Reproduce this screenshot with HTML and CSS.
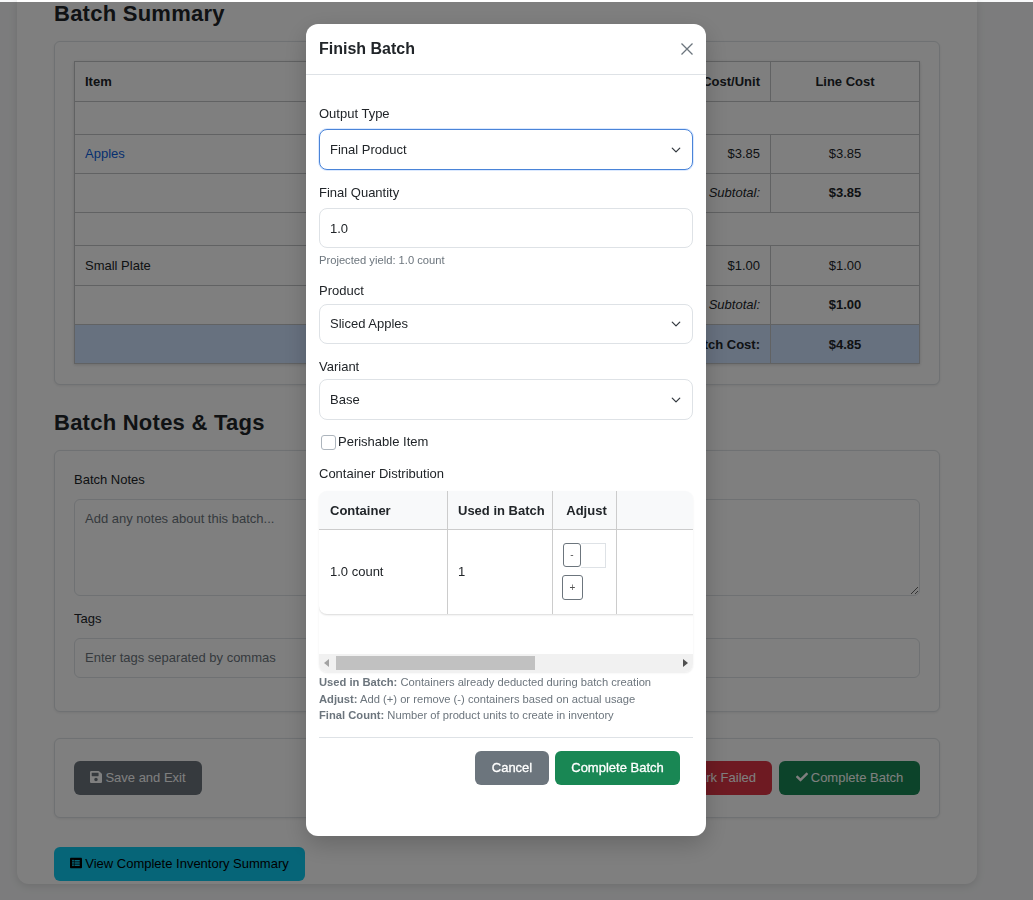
FILE: index.html
```html
<!DOCTYPE html>
<html lang="en">
<head>
<meta charset="utf-8">
<title>Finish Batch</title>
<link rel="stylesheet" href="styles.css">
</head>
<body>
<div class="page">
  <main class="card">
    <h2 class="heading">Batch Summary</h2>
    <section class="panel summary">
      <table class="cost">
        <colgroup><col class="c-item"><col class="c-mid"><col class="c-unit"><col class="c-line"></colgroup>
        <thead>
          <tr class="r-head"><th class="left">Item</th><th></th><th class="right">Cost/Unit</th><th>Line Cost</th></tr>
        </thead>
        <tbody>
          <tr class="r-group"><td colspan="4"></td></tr>
          <tr class="r-item"><td><a class="link" href="#">Apples</a></td><td></td><td class="right">$3.85</td><td class="center">$3.85</td></tr>
          <tr class="r-sub"><td colspan="3" class="right em">Ingredient Subtotal:</td><td class="center strong">$3.85</td></tr>
          <tr class="r-group"><td colspan="4"></td></tr>
          <tr class="r-item r-tall"><td>Small Plate</td><td></td><td class="right">$1.00</td><td class="center">$1.00</td></tr>
          <tr class="r-sub"><td colspan="3" class="right em">Container Subtotal:</td><td class="center strong">$1.00</td></tr>
          <tr class="r-total"><td colspan="3" class="right strong">Total Batch Cost:</td><td class="center strong">$4.85</td></tr>
        </tbody>
      </table>
    </section>

    <h2 class="heading heading-notes">Batch Notes &amp; Tags</h2>
    <section class="panel notes">
      <label class="plain-label">Batch Notes</label>
      <textarea class="area" placeholder="Add any notes about this batch..."></textarea>
      <label class="plain-label tags-label">Tags</label>
      <input class="tags" placeholder="Enter tags separated by commas">
    </section>

    <section class="panel actions">
      <button class="btn btn-grey">
        <svg class="ico" viewBox="0 0 448 512"><path d="M433.941 129.941l-83.882-83.882A48 48 0 0 0 316.118 32H48C21.49 32 0 53.49 0 80v352c0 26.51 21.49 48 48 48h352c26.51 0 48-21.49 48-48V163.882a48 48 0 0 0-14.059-33.941zM224 416c-35.346 0-64-28.654-64-64 0-35.346 28.654-64 64-64s64 28.654 64 64c0 35.346-28.654 64-64 64zm96-304.52V212c0 6.627-5.373 12-12 12H76c-6.627 0-12-5.373-12-12V108c0-6.627 5.373-12 12-12h228.52c3.183 0 6.235 1.264 8.485 3.515l3.48 3.48A11.996 11.996 0 0 1 320 111.48z"/></svg>
        <span>Save and Exit</span>
      </button>
      <div class="action-right">
        <button class="btn btn-red"><span>Mark Failed</span></button>
        <button class="btn btn-green">
          <svg class="ico" viewBox="0 0 512 512"><path d="M173.898 439.404l-166.4-166.4c-9.997-9.997-9.997-26.206 0-36.204l36.203-36.204c9.997-9.998 26.207-9.998 36.204 0L192 312.69 432.095 72.596c9.997-9.997 26.207-9.997 36.204 0l36.203 36.204c9.997 9.997 9.997 26.206 0 36.204l-294.4 294.401c-9.998 9.997-26.207 9.997-36.204-.001z"/></svg>
          <span>Complete Batch</span>
        </button>
      </div>
    </section>

    <button class="btn btn-cyan">
      <svg class="ico" viewBox="0 0 512 512"><path d="M464 480H48c-26.51 0-48-21.49-48-48V80c0-26.51 21.49-48 48-48h416c26.51 0 48 21.49 48 48v352c0 26.51-21.49 48-48 48zM128 120c-22.091 0-40 17.909-40 40s17.909 40 40 40 40-17.909 40-40-17.909-40-40-40zm0 96c-22.091 0-40 17.909-40 40s17.909 40 40 40 40-17.909 40-40-17.909-40-40-40zm0 96c-22.091 0-40 17.909-40 40s17.909 40 40 40 40-17.909 40-40-17.909-40-40-40zm288-136v-32c0-6.627-5.373-12-12-12H204c-6.627 0-12 5.373-12 12v32c0 6.627 5.373 12 12 12h200c6.627 0 12-5.373 12-12zm0 96v-32c0-6.627-5.373-12-12-12H204c-6.627 0-12 5.373-12 12v32c0 6.627 5.373 12 12 12h200c6.627 0 12-5.373 12-12zm0 96v-32c0-6.627-5.373-12-12-12H204c-6.627 0-12 5.373-12 12v32c0 6.627 5.373 12 12 12h200c6.627 0 12-5.373 12-12z"/></svg>
      <span>View Complete Inventory Summary</span>
    </button>
  </main>
</div>

<div class="backdrop"></div>

<div class="modal">
  <header class="modal-head">
    <h3 class="modal-title">Finish Batch</h3>
    <svg class="close" viewBox="0 0 16 16"><path d="M2.5 2.5l11 11M13.5 2.5l-11 11"/></svg>
  </header>
  <div class="modal-body">
    <label class="label l-output">Output Type</label>
    <select class="control focus"><option>Final Product</option></select>

    <label class="label l-qty">Final Quantity</label>
    <input class="control" value="1.0">
    <div class="hint">Projected yield: 1.0 count</div>

    <label class="label l-product">Product</label>
    <select class="control c-product"><option>Sliced Apples</option></select>

    <label class="label l-variant">Variant</label>
    <select class="control c-variant"><option>Base</option></select>

    <div class="check-row">
      <span class="checkbox"></span>
      <span class="check-text">Perishable Item</span>
    </div>

    <label class="label l-dist">Container Distribution</label>
    <div class="dist">
      <div class="dist-clip">
        <table class="dist-table">
          <colgroup><col class="d1"><col class="d2"><col class="d3"><col class="d4"></colgroup>
          <thead>
            <tr><th class="first">Container</th><th>Used in Batch</th><th class="mid">Adjust</th><th></th></tr>
          </thead>
          <tbody>
            <tr>
              <td class="first">1.0 count</td>
              <td>1</td>
              <td class="adjust">
                <div class="adj-top"><span class="adj-btn minus">-</span><span class="adj-input"></span></div>
                <span class="adj-btn plus">+</span>
              </td>
              <td></td>
            </tr>
          </tbody>
        </table>
      </div>
      <div class="scrollbar">
        <svg class="arrow" viewBox="0 0 6 8"><path d="M5 0v8L0 4z"/></svg>
        <div class="track"><div class="thumb"></div></div>
        <svg class="arrow dark" viewBox="0 0 6 8"><path d="M1 0v8l5-4z"/></svg>
      </div>
    </div>

    <div class="legend">
      <div><b>Used in Batch:</b> Containers already deducted during batch creation</div>
      <div><b>Adjust:</b> Add (+) or remove (-) containers based on actual usage</div>
      <div><b>Final Count:</b> Number of product units to create in inventory</div>
    </div>

    <div class="modal-foot">
      <button class="mbtn mbtn-grey">Cancel</button>
      <button class="mbtn mbtn-green">Complete Batch</button>
    </div>
  </div>
</div>
</body>
</html>
```

FILE: styles.css
```css
* { box-sizing: border-box; }
html, body { margin: 0; padding: 0; height: 100%; overflow: hidden; }
body {
  background: #f8f9fa;
  font-family: "Liberation Sans", Arial, sans-serif;
  font-size: 13px;
  color: #212529;
}
.page { padding: 0 56px 0 17px; height: 900px; }
.card {
  width: 960px;
  height: 884px;
  padding: 2px 37px 0;
  background: #fff;
  border-radius: 0 0 12px 12px;
  box-shadow: 0 2px 8px rgba(0,0,0,.12);
}
.heading {
  margin: 0;
  font-size: 22px;
  line-height: 24px;
  font-weight: 700;
  letter-spacing: .25px;
  color: #212529;
}
.heading-notes { margin-top: 26px; }
.panel {
  border: 1px solid #dee2e6;
  border-radius: 6px;
  box-shadow: 0 1px 3px rgba(0,0,0,.08);
  background: #fff;
}
.summary { margin-top: 15px; height: 344px; padding: 19px; }
.cost { width: 845px; border-collapse: collapse; table-layout: fixed; box-shadow: 0 1px 3px rgba(0,0,0,.15); }
.c-item { width: 300px; }
.c-mid { width: 300px; }
.c-unit { width: 96px; }
.c-line { width: 149px; }
.cost th, .cost td { border: 1px solid #c2c4c6; padding: 0 10px 1px; font-size: 13px; }
.cost th { font-weight: 700; text-align: center; }
.cost .left { text-align: left; }
.cost .right { text-align: right; }
.center { text-align: center; }
.em { font-style: italic; }
.strong { font-weight: 700; }
.link { color: #0d5fe0; text-decoration: none; }
.r-head { height: 40px; }
.r-group { height: 33px; }
.r-item { height: 39px; }
.r-tall { height: 40px; }
.r-sub { height: 39px; }
.r-total { height: 39px; background: #cfe2ff; }
.cost .r-total td { padding-bottom: 0; }
.notes { margin-top: 15px; height: 262px; padding: 21px 19px 0; }
.plain-label { display: block; font-size: 13px; line-height: 16px; }
.area {
  display: block;
  width: 100%;
  height: 97px;
  margin-top: 11px;
  padding: 11px 10px;
  border: 1px solid #dee2e6;
  border-radius: 6px;
  font: 13px "Liberation Sans", Arial, sans-serif;
}
.tags-label { margin-top: 15px; }
.tags {
  display: block;
  width: 100%;
  height: 40px;
  margin-top: 11px;
  padding: 0 10px 2px;
  border: 1px solid #dee2e6;
  border-radius: 6px;
  font: 13px "Liberation Sans", Arial, sans-serif;
}
input::placeholder, textarea::placeholder { color: #6c757d; opacity: 1; }
.actions {
  margin-top: 26px;
  height: 80px;
  padding: 0 19px;
  display: flex;
  align-items: center;
  justify-content: space-between;
}
.action-right { display: flex; gap: 7px; }
.btn {
  height: 34px;
  padding: 0 0 2px;
  border: 0;
  border-radius: 6px;
  font: 13px "Liberation Sans", Arial, sans-serif;
  display: inline-flex;
  align-items: center;
  justify-content: center;
  gap: 3px;
  white-space: nowrap;
  color: #fff;
}
.ico { width: 12px; height: 14px; fill: currentColor; flex: none; }
.btn-grey { background: #6c757d; width: 128px; }
.btn-red { background: #dc3545; width: 112px; padding-right: 16px; justify-content: flex-end; }
.btn-green { background: #198754; width: 141px; }
.btn-cyan { background: #0dcaf0; color: #000; width: 251px; margin-top: 29px; }

.backdrop {
  position: fixed;
  inset: 2px 0 0 0;
  background: rgba(0,0,0,.5);
}
.modal {
  position: fixed;
  left: 306px;
  top: 24px;
  width: 400px;
  height: 812px;
  background: #fff;
  border-radius: 12px;
  box-shadow: 0 8px 24px rgba(0,0,0,.2);
}
.modal-head {
  height: 51px;
  padding: 0 11px 0 13px;
  border-bottom: 1px solid #dee2e6;
  display: flex;
  align-items: center;
  justify-content: space-between;
}
.modal-title { margin: 0; font-size: 16px; font-weight: 700; color: #212529; }
.close { width: 16px; height: 16px; fill: none; stroke: #6c757d; stroke-width: 1.3; margin-top: -1px; }
.modal-body { padding: 0 13px; }
.label { display: block; font-size: 13px; line-height: 16px; }
.l-output { padding-top: 31px; }
.l-qty { padding-top: 15px; }
.l-product { padding-top: 17px; }
.l-variant { padding-top: 15px; }
.l-dist { padding-top: 17px; }
.control {
  display: block;
  width: 100%;
  height: 40px;
  margin-top: 7px;
  padding: 0 10px;
  border: 1px solid #dee2e6;
  border-radius: 8px;
  background-color: #fff;
  color: #212529;
  font: 13px "Liberation Sans", Arial, sans-serif;
  outline: none;
}
.c-product { margin-top: 5px; padding-bottom: 1px; }
.c-variant { margin-top: 4px; height: 41px; }
select.control {
  appearance: none;
  -webkit-appearance: none;
  background-image: url("data:image/svg+xml,%3csvg xmlns='http://www.w3.org/2000/svg' viewBox='0 0 16 16'%3e%3cpath fill='none' stroke='%23343a40' stroke-linecap='round' stroke-linejoin='round' stroke-width='2' d='m2 5 6 6 6-6'/%3e%3c/svg%3e");
  background-repeat: no-repeat;
  background-position: right 11px center;
  background-size: 10px 10px;
}
.focus { border-color: #4a84d8; box-shadow: 0 0 0 1px rgba(13,110,253,.15); height: 41px; }
.hint { margin-top: 6px; font-size: 11.2px; line-height: 12px; color: #6c757d; }
.check-row { display: flex; align-items: center; margin-top: 13px; height: 16px; padding-left: 2px; }
.checkbox { width: 15px; height: 15px; border: 1px solid #adb5bd; border-radius: 3px; margin-top: 2px; }
.check-text { margin-left: 2px; font-size: 13px; }
.dist {
  margin-top: 9px;
  height: 181px;
  border-radius: 8px;
  display: flex;
  flex-direction: column;
  box-shadow: 0 1px 2px rgba(0,0,0,.08);
  overflow: hidden;
}
.dist-clip { height: 163px; overflow: hidden; }
.dist-table {
  width: 420px;
  border-collapse: separate;
  border-spacing: 0;
  table-layout: fixed;
  border-radius: 8px;
  box-shadow: 0 1px 2px rgba(0,0,0,.15);
}
.d1 { width: 129px; }
.d2 { width: 105px; }
.d3 { width: 64px; }
.d4 { width: 122px; }
.dist-table th {
  height: 39px;
  background: #f8f9fa;
  font-size: 13px;
  font-weight: 700;
  text-align: left;
  padding: 0 10px;
  border-right: 1px solid #ccc;
  border-bottom: 1px solid #ccc;
  white-space: nowrap;
}
.dist-table th.mid { text-align: center; padding: 0 7px 0 11px; }
.dist-table td {
  height: 84px;
  padding: 0 10px 2px;
  font-size: 13px;
  border-right: 1px solid #ccc;
}
.dist-table .first { padding-left: 11px; }
.dist-table td.adjust { padding: 0 0 2px 9px; }
.adj-top { display: flex; }
.adj-btn {
  display: flex;
  align-items: center;
  justify-content: center;
  background: #fff;
  border: 1px solid #6c757d;
  border-radius: 3px;
  font-size: 10px;
  color: #555;
}
.minus { width: 18px; height: 24px; margin-left: 1px; }
.adj-input { width: 25px; height: 25px; border: 1px solid #dee2e6; border-left: 0; }
.plus { width: 21px; height: 25px; margin-top: 7px; }
.scrollbar {
  height: 18px;
  background: #f1f1f1;
  display: flex;
  align-items: center;
}
.arrow { width: 6px; height: 8px; margin: 0 5px; fill: #a3a3a3; flex: none; }
.arrow.dark { fill: #505050; }
.track { flex: 1; height: 14px; }
.thumb { width: 199px; height: 14px; background: #c1c1c1; margin-left: 1px; }
.legend { margin-top: 2px; font-size: 11.2px; line-height: 16.5px; color: #6c757d; }
.modal-foot {
  margin-top: 13px;
  padding: 13px 13px 0 0;
  border-top: 1px solid #dee2e6;
  display: flex;
  justify-content: flex-end;
  gap: 6px;
}
.mbtn {
  height: 34px;
  border: 0;
  border-radius: 6px;
  color: #fff;
  font: 13px "Liberation Sans", Arial, sans-serif;
  -webkit-text-stroke: .3px #fff;
}
.mbtn-grey { width: 74px; background: #6c757d; }
.mbtn-green { width: 125px; background: #198754; }
```
